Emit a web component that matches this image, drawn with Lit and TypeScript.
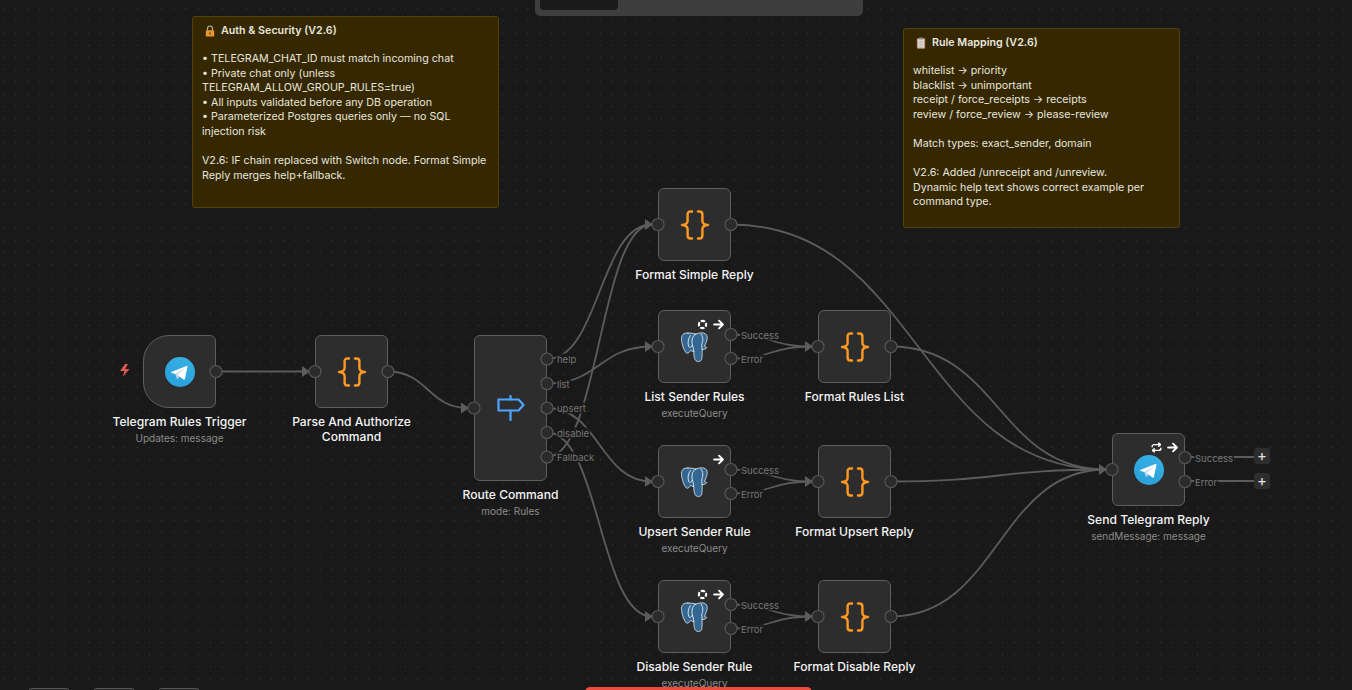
import {LitElement, html, svg, css} from 'lit';
import {customElement} from 'lit/decorators.js';

type Icon = 'telegram' | 'code' | 'switch' | 'postgres';

interface FlowNode {
    name: string;
    sub?: string;
    x: number;
    y: number;
    h?: number;
    icon: Icon;
    trigger?: boolean;
    spin?: boolean;
    loop?: boolean;
    arrow?: boolean;
    outs: string[];
}

const NODE_W = 73;

const NODES: FlowNode[] = [
    {name: 'Telegram Rules Trigger', sub: 'Updates: message', x: 143, y: 335, icon: 'telegram', trigger: true, outs: ['']},
    {name: 'Parse And Authorize Command', x: 315, y: 335, icon: 'code', outs: ['']},
    {name: 'Route Command', sub: 'mode: Rules', x: 474, y: 335, h: 146, icon: 'switch', outs: ['help', 'list', 'upsert', 'disable', 'Fallback']},
    {name: 'Format Simple Reply', x: 658, y: 188, icon: 'code', outs: ['']},
    {name: 'List Sender Rules', sub: 'executeQuery', x: 658, y: 310, icon: 'postgres', spin: true, arrow: true, outs: ['Success', 'Error']},
    {name: 'Format Rules List', x: 818, y: 310, icon: 'code', outs: ['']},
    {name: 'Upsert Sender Rule', sub: 'executeQuery', x: 658, y: 445, icon: 'postgres', arrow: true, outs: ['Success', 'Error']},
    {name: 'Format Upsert Reply', x: 818, y: 445, icon: 'code', outs: ['']},
    {name: 'Disable Sender Rule', sub: 'executeQuery', x: 658, y: 580, icon: 'postgres', spin: true, arrow: true, outs: ['Success', 'Error']},
    {name: 'Format Disable Reply', x: 818, y: 580, icon: 'code', outs: ['']},
    {name: 'Send Telegram Reply', sub: 'sendMessage: message', x: 1112, y: 433, icon: 'telegram', loop: true, arrow: true, outs: ['Success', 'Error']},
];

// [from node, output index, to node]
const EDGES: [number, number, number][] = [
    [0, 0, 1], [1, 0, 2],
    [2, 0, 3], [2, 1, 4], [2, 2, 6], [2, 3, 8], [2, 4, 3],
    [4, 0, 5], [4, 1, 5], [6, 0, 7], [6, 1, 7], [8, 0, 9], [8, 1, 9],
    [3, 0, 10], [5, 0, 10], [7, 0, 10], [9, 0, 10],
];

const NOTES = [
    {
        x: 192, y: 16, w: 307, h: 192, title: 'Auth & Security (V2.6)', icon: 'lock',
        body: `• TELEGRAM_CHAT_ID must match incoming chat
• Private chat only (unless TELEGRAM_ALLOW_GROUP_RULES=true)
• All inputs validated before any DB operation
• Parameterized Postgres queries only — no SQL injection risk

V2.6: IF chain replaced with Switch node. Format Simple Reply merges help+fallback.`,
    },
    {
        x: 903, y: 28, w: 277, h: 200, title: 'Rule Mapping (V2.6)', icon: 'clip',
        body: `whitelist → priority
blacklist → unimportant
receipt / force_receipts → receipts
review / force_review → please-review

Match types: exact_sender, domain

V2.6: Added /unreceipt and /unreview.
Dynamic help text shows correct example per command type.`,
    },
];

function outY(n: FlowNode, i: number) {
    const h = n.h ?? NODE_W;
    if (n.outs.length === 1) return n.y + h / 2;
    if (n.outs.length === 2) return n.y + h / 2 + (i === 0 ? -12 : 12);
    return n.y + 24 + i * 24.5;
}

function inY(n: FlowNode) {
    return n.y + (n.h ?? NODE_W) / 2;
}

function edgePath(x1: number, y1: number, x2: number, y2: number) {
    if (y1 === y2) return `M${x1} ${y1}L${x2} ${y2}`;
    const d = Math.max(30, (x2 - x1) / 2);
    return `M${x1} ${y1}C${x1 + d} ${y1} ${x2 - d} ${y2} ${x2} ${y2}`;
}

const telegram = html`<svg class="tg" viewBox="0 0 240 240">
    <defs><linearGradient id="tg" x1=".67" y1=".17" x2=".42" y2=".75"><stop offset="0" stop-color="#37aee2"/><stop offset="1" stop-color="#2ba3dc"/></linearGradient></defs>
    <circle cx="120" cy="120" r="120" fill="url(#tg)"/>
    <path fill="#c8daea" d="M98 175c-3.9 0-3.2-1.5-4.6-5.2L82 132.2 152.8 88l8.3 2.2-6.9 18.8L98 175z"/>
    <path fill="#a9c9dd" d="M98 175c3 0 4.3-1.4 6-3 2.6-2.5 36-35 36-35l-20.5-5-19 12-2.5 30v1z"/>
    <path fill="#fff" d="M100 144.4l48.4 35.7c5.5 3 9.5 1.5 10.9-5.1L179 82.2c2-8.1-3.1-11.7-8.4-9.3L55 117.5c-7.9 3.2-7.8 7.6-1.4 9.5l29.7 9.3L152 93c3.2-2 6.2-.9 3.8 1.3L100 144.4z"/>
</svg>`;

const code = html`<svg class="code" viewBox="0 0 30 30" fill="none" stroke="#ff9922" stroke-width="2.4" stroke-linecap="round" stroke-linejoin="round">
    <path d="M12 1.5H10.5C8.5 1.5 7.6 2.6 7.6 4.5V11C7.6 13.2 6.2 14.6 2 15C6.2 15.4 7.6 16.8 7.6 19V25.5C7.6 27.4 8.5 28.5 10.5 28.5H12"/>
    <path d="M18 1.5H19.5C21.5 1.5 22.4 2.6 22.4 4.5V11C22.4 13.2 23.8 14.6 28 15C23.8 15.4 22.4 16.8 22.4 19V25.5C22.4 27.4 21.5 28.5 19.5 28.5H18"/>
</svg>`;

const signpost = html`<svg class="sign" viewBox="0 0 28 26" fill="none" stroke="#4ea5ff" stroke-width="2.2" stroke-linejoin="round" stroke-linecap="round">
    <path d="M13.5 1V4.5M13.5 15.5V25"/>
    <path d="M1.5 4.5H21.5L26.5 10L21.5 15.5H1.5Z"/>
</svg>`;

const postgres = html`<svg class="pg" viewBox="0 0 27 30" stroke="#fff" stroke-linejoin="round" stroke-linecap="round">
    <path fill="#336791" stroke-width=".7" d="M7 1C2.5 .6 .2 3 .5 7.5C.8 12 3 19 5.5 21C7 22 8.5 20 9.6 18.4C10.5 19 11.5 19.4 12.8 19.6C12.8 23 13 26 14.3 28C15.6 30 19.5 30 20.5 27.8C21.4 25.5 21 21 21.2 17.6C22.8 17.6 25 17 25.8 15.6C25.6 15 24.2 15 23.4 14.4C25 11 26.4 8 26.2 5C26 2 23.5 .8 20.5 .8C18.5 .8 16.5 1.4 15 2C12.5 1.2 9.5 1.1 7 1Z"/>
    <path fill="none" stroke-width=".8" d="M15 2C12 3 10.6 7 11 11C11.3 14 12.8 16 12.8 19.6M9.4 3.5C7 7 6.6 11 7.6 14C8.2 16 10 16 11 13.5M20 2.2C22.5 5 22 9 21 11.5C20.4 13.5 21 15 21.2 17.6"/>
</svg>`;

const icons: Record<Icon, unknown> = {telegram, code, switch: signpost, postgres};

const arrowIcon = html`<svg class="st" viewBox="0 0 10 10" fill="none" stroke="#fff" stroke-width="1.7" stroke-linecap="round" stroke-linejoin="round"><path d="M1 5H9M5.5 1.5L9 5L5.5 8.5"/></svg>`;
const spinIcon = html`<svg class="st" viewBox="0 0 10 10" fill="none" stroke="#fff" stroke-width="1.9"><circle cx="5" cy="5" r="3.3" stroke-dasharray="3.9 1.28" stroke-dashoffset="1.95"/></svg>`;
const loopIcon = html`<svg class="st" viewBox="0 0 10 10" fill="none" stroke="#fff" stroke-width="1.3" stroke-linecap="round" stroke-linejoin="round"><path d="M1 4.4C1 3 1.8 2.4 3 2.4H8.4M7 1L8.6 2.4L7 3.8M9 5.6C9 7 8.2 7.6 7 7.6H1.6M3 6.2L1.4 7.6L3 9"/></svg>`;

const lock = html`<svg class="emoji" viewBox="0 0 12 14"><path d="M3 6.5V4.2C3 2.4 4.3 1 6 1S9 2.4 9 4.2V6.5" fill="none" stroke="#b9b4a6" stroke-width="1.4"/><rect x="1" y="6" width="10" height="7.6" rx="1" fill="#e8962e"/><rect x="5.3" y="8.4" width="1.4" height="3" fill="#6b4412"/></svg>`;
const clip = html`<svg class="emoji" viewBox="0 0 12 14"><rect x="1" y="1.2" width="10" height="12.6" rx="1" fill="#c08a6a"/><rect x="2.2" y="2.4" width="7.6" height="10.2" fill="#dcdcdc"/><rect x="3.8" y=".3" width="4.4" height="2.4" rx=".6" fill="#8d8d8d"/><path d="M3.2 5H8.8M3.2 7H8.8M3.2 9H8.8M3.2 11H7" stroke="#9a9a9a" stroke-width=".6"/></svg>`;

@customElement('app-root')
class AppRoot extends LitElement {
    static styles = css`
:host {
    display: block;
    position: relative;
    width: 1352px;
    height: 690px;
    overflow: hidden;
    background-color: #191919;
    background-image: radial-gradient(circle at center, #343434 0, #343434 .7px, transparent 1px);
    background-size: 12.2px 12.2px;
    background-position: -2.9px 2.7px;
    font-family: Inter, "Noto Sans", sans-serif;
}
.layer {
    position: absolute;
    inset: 0;
    width: 1352px;
    height: 690px;
    pointer-events: none;
}
.note {
    position: absolute;
    box-sizing: border-box;
    padding: 7px 9px;
    background: #352800;
    border: 1px solid #574300;
    border-radius: 3px;
    color: #e8e6df;
    font-size: 10.7px;
    line-height: 14.6px;
}
.note-title {
    display: flex;
    align-items: center;
    gap: 6px;
    padding-left: 3px;
    margin-bottom: 13.4px;
    font-weight: 600;
}
.emoji {
    width: 10px;
    height: 12px;
}
.note-body {
    white-space: pre-line;
}
.node {
    position: absolute;
    box-sizing: border-box;
    width: 73px;
    display: flex;
    align-items: center;
    justify-content: center;
    background: #2d2d2d;
    border: 1.5px solid #5e5e5e;
    border-radius: 6px;
}
.node.trigger {
    border-radius: 26px 6px 6px 26px;
}
.tg {
    width: 30px;
    height: 30px;
}
.code {
    width: 30px;
    height: 30px;
}
.sign {
    width: 28px;
    height: 26px;
}
.pg {
    width: 27px;
    height: 30px;
}
.status {
    position: absolute;
    top: 8px;
    right: 6px;
    display: flex;
    gap: 5px;
}
.st {
    width: 11px;
    height: 11px;
    display: block;
}
.caption {
    position: absolute;
    top: calc(100% + 6.5px);
    left: -40px;
    right: -40px;
    text-align: center;
    color: #f4f4f4;
    font-size: 12.1px;
    font-weight: 500;
    line-height: 15px;
}
.caption.narrow {
    left: -30px;
    right: -30px;
}
.sub {
    margin-top: 2.5px;
    color: #8c8c8c;
    font-size: 10px;
    font-weight: 400;
    line-height: 14px;
}
.label {
    position: absolute;
    transform: translateY(-50%);
    padding: 0 1px;
    background: rgba(25, 25, 25, .85);
    color: #767676;
    font-size: 9.5px;
    line-height: 11px;
}
.plus {
    position: absolute;
    width: 16px;
    height: 16px;
    display: flex;
    align-items: center;
    justify-content: center;
    background: #2d2d2d;
    border-radius: 3px;
    color: #e4e4e4;
    font-size: 15px;
    line-height: 16px;
}
.topbar {
    position: absolute;
    top: -10px;
    left: 535px;
    width: 328px;
    height: 26px;
    padding: 0 5px;
    box-sizing: border-box;
    background: #3e3e3e;
    border-radius: 5px;
}
.topbar div {
    width: 78px;
    height: 20px;
    background: #1a1a1a;
    border-radius: 4px;
}
.dock {
    position: absolute;
    left: 27px;
    top: 688px;
    display: flex;
    gap: 21px;
}
.dock div {
    width: 44px;
    height: 20px;
    background: #2a2a2a;
    border: 1px solid #555;
    box-sizing: border-box;
    border-radius: 5px;
}
.run {
    position: absolute;
    left: 585px;
    top: 687px;
    width: 227px;
    height: 20px;
    background: #ef4b3c;
    border-radius: 5px;
}
`;

    renderEdges() {
        return svg`
            ${EDGES.map(([a, i, b]) => {
                const from = NODES[a], to = NODES[b];
                return svg`<path d=${edgePath(from.x + NODE_W, outY(from, i), to.x - 6, inY(to))} fill="none" stroke="#5c5c5c" stroke-width="1.8"/>`;
            })}
            <path d="M1185 457H1254M1185 481H1254" fill="none" stroke="#5c5c5c" stroke-width="1.8"/>
        `;
    }

    renderPorts() {
        return svg`${NODES.map((n, idx) => {
            const ins = idx === 0 ? [] : [inY(n)];
            return svg`
                ${ins.map(y => svg`<path d="M${n.x - 13} ${y - 5.5}L${n.x - 5} ${y}L${n.x - 13} ${y + 5.5}Z" fill="#5c5c5c"/>
                    <circle cx=${n.x} cy=${y} r="6" fill="#2b2b2b" stroke="#565656" stroke-width="1.2"/>`)}
                ${n.outs.map((_, i) => svg`<circle cx=${n.x + NODE_W} cy=${outY(n, i)} r="6" fill="#2b2b2b" stroke="#565656" stroke-width="1.2"/>`)}
            `;
        })}`;
    }

    renderNode(n: FlowNode) {
        const narrow = n.name.startsWith('Parse');
        return html`<div class="node ${n.trigger ? 'trigger' : ''}" style="left:${n.x}px;top:${n.y}px;height:${n.h ?? NODE_W}px">
            ${icons[n.icon]}
            ${n.arrow ? html`<div class="status">${n.spin ? spinIcon : ''}${n.loop ? loopIcon : ''}${arrowIcon}</div>` : ''}
            <div class="caption ${narrow ? 'narrow' : ''}">${n.name}${n.sub ? html`<div class="sub">${n.sub}</div>` : ''}</div>
        </div>`;
    }

    renderLabels(n: FlowNode) {
        return n.outs.filter(l => l).map((l, i) =>
            html`<span class="label" style="left:${n.x + NODE_W + 9}px;top:${outY(n, i)}px">${l}</span>`);
    }

    render() {
        return html`
            <div class="topbar"><div></div></div>
            ${NOTES.map(note => html`<div class="note" style="left:${note.x}px;top:${note.y}px;width:${note.w}px;height:${note.h}px">
                <div class="note-title">${note.icon === 'lock' ? lock : clip}<span>${note.title}</span></div>
                <div class="note-body">${note.body}</div>
            </div>`)}
            <svg class="layer">${this.renderEdges()}</svg>
            ${NODES.map(n => this.renderNode(n))}
            <svg class="layer">${this.renderPorts()}
                <path d="M125 364L120 371H124.5L122.5 377L129.5 369H125.2L128 364Z" fill="#e0594e"/>
            </svg>
            ${NODES.map(n => this.renderLabels(n))}
            <div class="plus" style="left:1254px;top:448px">+</div>
            <div class="plus" style="left:1254px;top:473px">+</div>
            <div class="dock"><div></div><div></div><div></div></div>
            <div class="run"></div>
        `;
    }
}
